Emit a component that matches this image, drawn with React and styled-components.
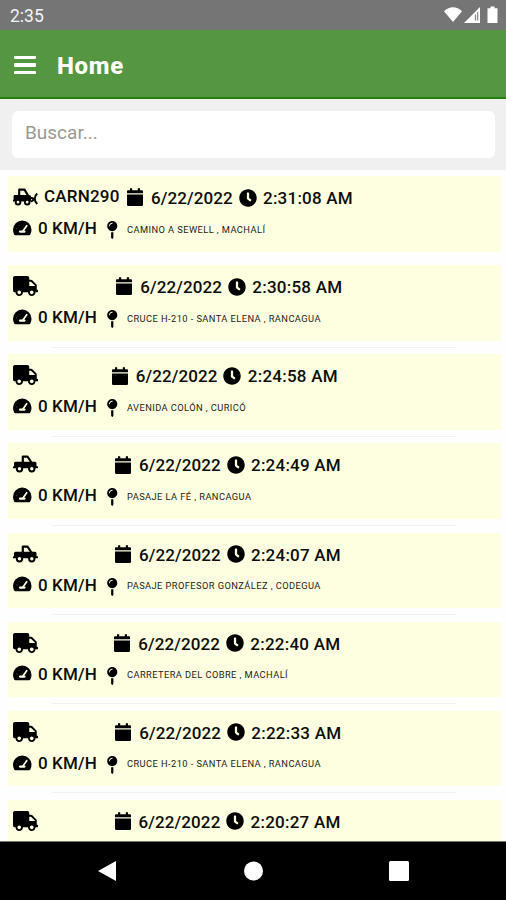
import React from "react";
import styled, { createGlobalStyle } from "styled-components";
import { FaClock, FaMapPin, FaTruck } from "react-icons/fa";

const GlobalStyle = createGlobalStyle`
  * {
    box-sizing: border-box;
  }
  body {
    margin: 0;
    font-family: Roboto, sans-serif;
    background: #ffffff;
  }
`;

const Screen = styled.div`
  display: flex;
  flex-direction: column;
  width: 506px;
  height: 900px;
  overflow: hidden;
`;

const StatusBar = styled.div`
  flex: none;
  display: flex;
  justify-content: space-between;
  align-items: center;
  height: 30px;
  padding: 2px 8px 0 10px;
  background: #757575;
  color: #f4f4f4;
  font-size: 17.5px;
`;

const StatusIcons = styled.div`
  display: flex;
  align-items: center;
  margin-top: -2px;
  svg {
    display: block;
  }
`;

const Header = styled.header`
  flex: none;
  display: flex;
  align-items: center;
  gap: 21px;
  height: 69px;
  padding: 3px 14px 0;
  background: #559740;
  border-bottom: 2px solid #23800f;
`;

const MenuButton = styled.button`
  display: flex;
  flex-direction: column;
  gap: 4px;
  width: 22px;
  padding: 0;
  border: 0;
  background: none;
`;

const MenuBar = styled.span`
  height: 3.6px;
  border-radius: 1px;
  background: #ffffff;
`;

const Title = styled.h1`
  margin: 2px 0 0;
  color: #ffffff;
  font-size: 24px;
  line-height: 28px;
  font-weight: 800;
  letter-spacing: 0.7px;
`;

const SearchArea = styled.div`
  flex: none;
  height: 71px;
  padding: 12px 11px 13px 12px;
  background: #f0f0f0;
`;

const SearchInput = styled.input`
  display: block;
  width: 100%;
  height: 47px;
  padding: 0 13px 4px;
  border: 0;
  border-radius: 6px;
  outline: none;
  background: #ffffff;
  font-family: Roboto, sans-serif;
  font-size: 19px;
  &::placeholder {
    color: #9b9991;
  }
`;

const List = styled.main`
  flex: 1;
  min-height: 0;
  overflow: hidden;
  padding: 6px 5px 0 8px;
  background: #fefefe;
`;

const Card = styled.div`
  height: 75.6px;
  padding-left: 5px;
  background: #feffe0;
`;

const Divider = styled.div`
  height: 13.55px;
  padding: 6px 45px 0 44px;
  &::after {
    content: "";
    display: block;
    height: 1px;
    background: ${(props) => (props.$hidden ? "transparent" : "#f1f0f2")};
  }
`;

const TopLine = styled.div`
  display: flex;
  align-items: center;
  height: 43px;
`;

const BottomLine = styled.div`
  display: flex;
  align-items: center;
  height: 19px;
`;

const Icon = styled.span`
  flex: none;
  display: block;
  width: ${(props) => props.$w}px;
  height: ${(props) => props.$h}px;
  margin-top: ${(props) => props.$top || 0}px;
  margin-left: ${(props) => props.$left || 0}px;
  svg {
    display: block;
    width: 100%;
    height: 100%;
  }
`;

const Vehicle = styled.div`
  flex: none;
  display: flex;
  align-items: center;
  gap: 6px;
  width: ${(props) => props.$width}px;
`;

const Label = styled.span`
  flex: none;
  width: ${(props) => props.$width}px;
  margin-left: ${(props) => props.$left || 0}px;
  margin-top: ${(props) => props.$top || 0}px;
  color: #0c0c08;
  font-size: 17px;
  line-height: 20px;
  font-weight: 500;
  letter-spacing: ${(props) => props.$spacing || 0}px;
  white-space: nowrap;
`;

const Address = styled.span`
  margin: 2px 0 0 7px;
  color: #1c1c16;
  font-size: 9.3px;
  line-height: 12px;
  letter-spacing: 0.42px;
  white-space: nowrap;
`;

const NavBar = styled.nav`
  flex: none;
  display: flex;
  align-items: center;
  justify-content: center;
  gap: 126px;
  height: 59px;
  border-top: 1px solid #77776c;
  background: #000000;
  svg {
    display: block;
  }
`;

const PickupIcon = () => (
  <svg viewBox="0 0 25 20" fill="none">
    <path d="M9.800 9V2.700h4.700L18.800 9" stroke="#000" strokeWidth="2.200" strokeLinejoin="round" />
    <path
      d="M2.500 7.800h19.500q1.500 0 1.500 1.500v3h1q.5 0 .5.500v1.400H0v-1.400q0-.5.500-.5H1V9.300q0-1.500 1.500-1.500z"
      fill="#000"
    />
    <circle cx="6.500" cy="14.800" r="2.700" fill="#feffe0" stroke="#000" strokeWidth="2" />
    <circle cx="18.800" cy="14.800" r="2.700" fill="#feffe0" stroke="#000" strokeWidth="2" />
  </svg>
);

const PlowIcon = () => (
  <svg viewBox="0 0 25 20" fill="none">
    <path d="M6.200 9V2.600h5.300L15.300 9" stroke="#000" strokeWidth="2.100" strokeLinejoin="round" />
    <path
      d="M1.700 8h14.600q1.700 0 1.700 1.700v4.800H0v-1.700h.6V9q0-1 1.100-1z"
      fill="#000"
    />
    <circle cx="5" cy="15.200" r="2.300" fill="#feffe0" stroke="#000" strokeWidth="1.900" />
    <circle cx="14.200" cy="15.200" r="2.300" fill="#feffe0" stroke="#000" strokeWidth="1.900" />
    <path d="M17 10.500l4.500 1.500M18 14.800l3.500-2.500" stroke="#000" strokeWidth="2" />
    <path d="M24.200 6.500c-3.200 2.700-3.200 7.500 0 10.500" stroke="#000" strokeWidth="2" />
  </svg>
);

const CalendarIcon = () => (
  <svg viewBox="0 0 16 18.300" fill="#000">
    <path d="M3 .2h2.200v3H3zM10.800.2H13v3h-2.200z" />
    <path d="M1 2.300h14q1 0 1 1v2H0v-2q0-1 1-1z" />
    <path d="M0 6.500h16v10.300q0 1.200-1.200 1.200H1.200Q0 18 0 16.800z" />
  </svg>
);

const GaugeIcon = () => (
  <svg viewBox="0 0 18.500 16.500" fill="none">
    <path
      d="M9.250.6A9.200 9.200 0 0 0 0 9.800c0 1.700.5 3.300 1.200 4.700q.4.700 1.200.7h13.700q.8 0 1.200-.7c.7-1.400 1.200-3 1.200-4.700A9.200 9.200 0 0 0 9.250.6z"
      fill="#000"
    />
    <path d="M10 11l3.700-5.300" stroke="#feffe0" strokeWidth="1.700" strokeLinecap="round" />
    <path d="M7 11.600h4.500" stroke="#feffe0" strokeWidth="2.200" strokeLinecap="round" />
    <path d="M3.200 8.800h1M5.500 5l.6.600" stroke="#55554a" strokeWidth="0.900" />
  </svg>
);

const vehicleIcons = {
  plow: PlowIcon,
  truck: FaTruck,
  pickup: PickupIcon,
};

// slot: width taken by the vehicle icon and its plate
const rows = [
  { type: "plow", plate: "CARN290", slot: 114, time: "2:31:08 AM", address: "CAMINO A SEWELL , MACHALÍ" },
  { type: "truck", slot: 103.3, time: "2:30:58 AM", address: "CRUCE H-210 - SANTA ELENA , RANCAGUA" },
  { type: "truck", slot: 98.8, time: "2:24:58 AM", address: "AVENIDA COLÓN , CURICÓ" },
  { type: "pickup", slot: 102, time: "2:24:49 AM", address: "PASAJE LA FÉ , RANCAGUA" },
  { type: "pickup", slot: 102, time: "2:24:07 AM", address: "PASAJE PROFESOR GONZÁLEZ , CODEGUA" },
  { type: "truck", slot: 101.3, time: "2:22:40 AM", address: "CARRETERA DEL COBRE , MACHALÍ" },
  { type: "truck", slot: 102.3, time: "2:22:33 AM", address: "CRUCE H-210 - SANTA ELENA , RANCAGUA" },
  { type: "truck", slot: 101.6, time: "2:20:27 AM" },
];

const VehicleCard = ({ type, plate, slot, time, address }) => {
  const VehicleIcon = vehicleIcons[type];
  return (
    <Card>
      <TopLine>
        <Vehicle $width={slot}>
          <Icon $w={25} $h={20} $top={-1}>
            <VehicleIcon />
          </Icon>
          {plate && (
            <Label $top={-3} $spacing={0.2}>
              {plate}
            </Label>
          )}
        </Vehicle>
        <Icon $w={16} $h={18.3}>
          <CalendarIcon />
        </Icon>
        <Label $width={87.5} $left={8} $top={1} $spacing={0.1}>
          6/22/2022
        </Label>
        <Icon $w={18} $h={18}>
          <FaClock />
        </Icon>
        <Label $left={6.5} $top={1} $spacing={0.23}>
          {time}
        </Label>
      </TopLine>
      {address && (
        <BottomLine>
          <Icon $w={18.5} $h={16.5} $top={-1}>
            <GaugeIcon />
          </Icon>
          <Label $width={62.5} $left={6.5} $top={-1} $spacing={0.1}>
            0 KM/H
          </Label>
          <Icon $w={16.5} $h={18} $top={3} $left={3}>
            <FaMapPin />
          </Icon>
          <Address>{address}</Address>
        </BottomLine>
      )}
    </Card>
  );
};

const App = () => {
  return (
    <Screen>
      <GlobalStyle />
      <StatusBar>
        <span>2:35</span>
        <StatusIcons>
          <svg width="54" height="18" viewBox="0 0 54 18" fill="#ffffff">
            <path d="M0 5.300C5.500 0 12.500 0 18 5.300L9 16z" />
            <path d="M36 1v16H20z" />
            <path d="M31.500 8.500v6M33.700 6v8.500" stroke="#858585" strokeWidth="1.200" />
            <path d="M46.500 0.500h4v1.700h3v14.800h-10v-14.800h3z" />
          </svg>
        </StatusIcons>
      </StatusBar>
      <Header>
        <MenuButton aria-label="Menu">
          <MenuBar />
          <MenuBar />
          <MenuBar />
        </MenuButton>
        <Title>Home</Title>
      </Header>
      <SearchArea>
        <SearchInput placeholder="Buscar..." />
      </SearchArea>
      <List>
        {rows.map((row, i) => (
          <React.Fragment key={row.time}>
            <VehicleCard {...row} />
            <Divider $hidden={i === 0} />
          </React.Fragment>
        ))}
      </List>
      <NavBar>
        <svg width="20" height="22" viewBox="0 0 20 22">
          <path d="M19 1v20L1 11z" fill="#ffffff" />
        </svg>
        <svg width="20" height="20" viewBox="0 0 20 20">
          <circle cx="10.500" cy="10" r="9.500" fill="#ffffff" />
        </svg>
        <svg width="20" height="20" viewBox="0 0 20 20">
          <rect width="20" height="20" rx="1.500" fill="#ffffff" />
        </svg>
      </NavBar>
    </Screen>
  );
};

export default App;
